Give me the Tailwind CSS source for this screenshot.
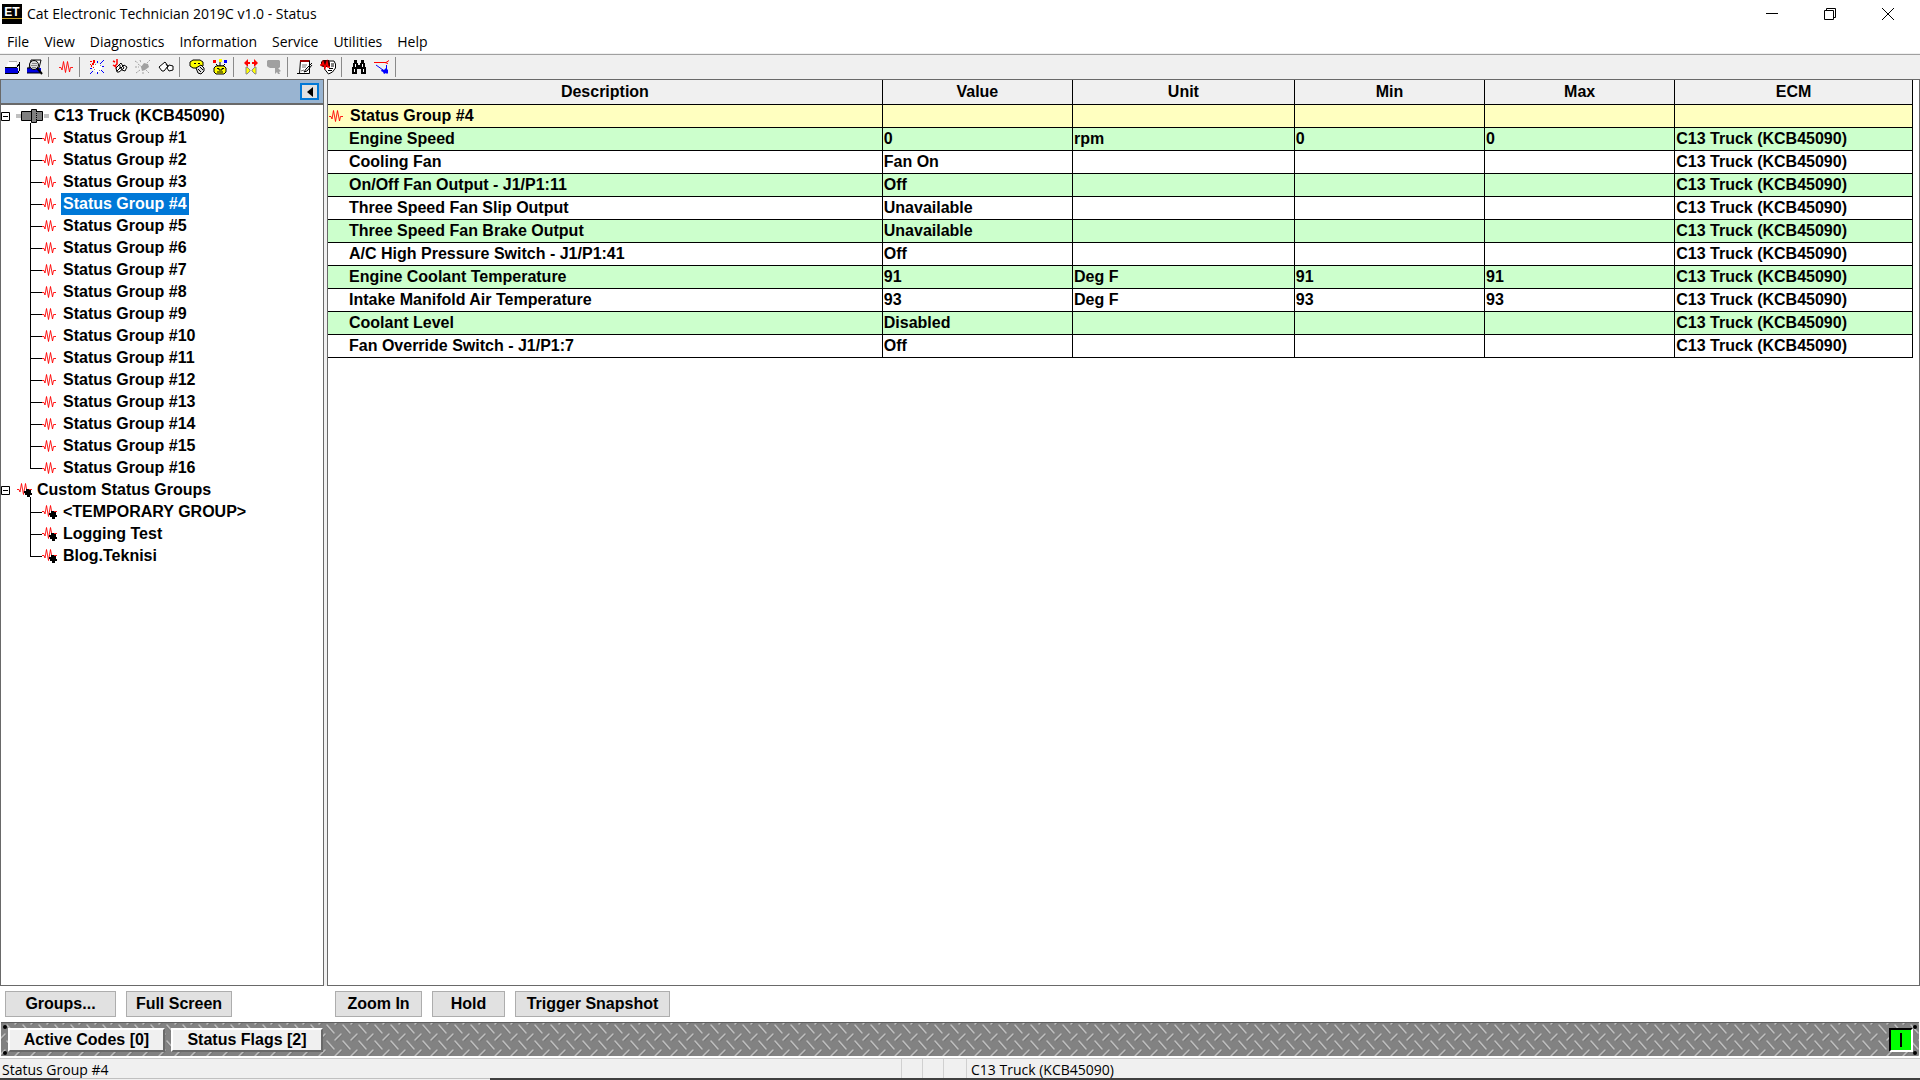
<!DOCTYPE html>
<html lang="en">
<head>
    <meta charset="UTF-8">
    <meta name="viewport" content="width=device-width, initial-scale=1.0">
    <title>Cat Electronic Technician 2019C v1.0 - Status</title>
    <script src="https://cdn.jsdelivr.net/npm/@tailwindcss/browser@4"></script>
</head>
<body class="h-screen flex flex-col overflow-hidden bg-white text-black font-['Open_Sans',sans-serif] text-sm">

    <!-- shared symbols -->
    <svg class="hidden">
        <symbol id="wave" viewBox="0 0 14 12">
            <path d="M0 6.500H2L3 9L4.500 .5L6.500 11.500L8.500 .5L10.500 11L11.500 6.500H14" fill="none" stroke="#f00" stroke-width=".9"/>
        </symbol>
        <symbol id="wave-custom" viewBox="0 0 16 15">
            <path d="M0 6.500H2L3 9L4.500 .5L6.500 11.500L8.500 .5L10.500 11L11.500 6.500H15" fill="none" stroke="#f00" stroke-width=".9"/>
            <path d="M9 6h3v1h2v3h1v2h-2v2h-3v-2H8v-2H7V8h2z" fill="#000"/>
        </symbol>
    </svg>

    <header class="flex items-start justify-between h-7 pr-[3px]">
        <div class="flex items-center h-7 pl-0.5 gap-1">
            <svg class="w-5 h-5" viewBox="0 0 20 20">
                <rect width="20" height="20" fill="#000"/>
                <rect y="14" width="20" height="1" fill="#c9a227"/>
                <text x="10" y="12" font-family="Liberation Sans" font-size="12" font-weight="bold" fill="#fff" text-anchor="middle">ET</text>
            </svg>
            <h1 class="pl-px">Cat Electronic Technician 2019C v1.0 - Status</h1>
        </div>
        <div class="flex">
            <button class="w-[58px] h-7 flex items-center justify-center" aria-label="Minimize">
                <svg class="w-3 h-3" viewBox="0 0 12 12"><path d="M0 5.5H12" stroke="#000"/></svg>
            </button>
            <button class="w-[58px] h-7 flex items-center justify-center" aria-label="Restore">
                <svg class="w-3 h-3" viewBox="0 0 12 12"><path d="M.5 2.5H9.5V11.5H.5zM2.5 2.5V.5H11.5V9.5H9.5" fill="none" stroke="#000"/></svg>
            </button>
            <button class="w-[58px] h-7 flex items-center justify-center" aria-label="Close">
                <svg class="w-3 h-3" viewBox="0 0 12 12"><path d="M0 0L12 12M12 0L0 12" stroke="#000"/></svg>
            </button>
        </div>
    </header>

    <nav class="flex gap-px h-[26px] border-b border-[#f0f0f0]">
        <a href="#" class="px-[7px] pt-1">File</a>
        <a href="#" class="px-[7px] pt-1">View</a>
        <a href="#" class="px-[7px] pt-1">Diagnostics</a>
        <a href="#" class="px-[7px] pt-1">Information</a>
        <a href="#" class="px-[7px] pt-1">Service</a>
        <a href="#" class="px-[7px] pt-1">Utilities</a>
        <a href="#" class="px-[7px] pt-1">Help</a>
    </nav>

    <div class="flex items-center h-[25px] py-0.5 bg-[#f0f0f0] border-t border-[#a0a0a0]">
        <div class="flex h-5 items-center pr-0.5 border-r border-[#8a8a8a]">
            <button class="w-[23px] flex justify-center" aria-label="Print">
                <svg class="w-4 h-4" viewBox="0 0 16 16" shape-rendering="crispEdges">
                    <path d="M5 2h8l-2 6H2z" fill="#fff"/>
                    <path d="M5 2h8" stroke="#aaa"/>
                    <path d="M1 9h13v5H1z" fill="#0000e0"/>
                    <path d="M1 8h12l2-3v7l-1 2H1" fill="none" stroke="#000"/>
                </svg>
            </button>
            <button class="w-[23px] flex justify-center" aria-label="Print preview">
                <svg class="w-4 h-4" viewBox="0 0 16 16">
                    <path d="M4 1h10l-2 8H2z" fill="#fff" stroke="#000"/>
                    <path d="M0 9h14v5H0z" fill="#0000e0"/>
                    <path d="M0 9h3M0 14h13" stroke="#000"/>
                    <circle cx="7" cy="6" r="4.500" fill="#ddd" stroke="#000"/>
                    <path d="M5 4.500h5M4 6.500h6M5 8.500h4" stroke="#888"/>
                    <path d="M10 9l5 6" stroke="#000" stroke-width="2"/>
                </svg>
            </button>
        </div>
        <div class="flex h-5 items-center pl-[5px] pr-0.5 border-r border-[#8a8a8a]">
            <button class="w-[23px] flex justify-center" aria-label="Status">
                <svg class="w-[14px] h-3"><use href="#wave"/></svg>
            </button>
        </div>
        <div class="flex h-5 items-center pl-[5px] pr-0.5 border-r border-[#8a8a8a]">
            <button class="w-[23px] flex justify-center" aria-label="Active codes">
                <svg class="w-4 h-4" viewBox="0 0 16 16" shape-rendering="crispEdges">
                    <path d="M5 5h5l3 3-1 4-4 2-4-3z" fill="#fff"/>
                    <path d="M1 2h2v1H1zM4 1h2v3H4zM3 4h2v2H3zM2 6h1v2H2zM1 5h1v1H1zM4 8h1v1H4z" fill="#f00"/>
                    <path d="M8 2h1v2H8zM14 1h1v1h-1zM13 2h1v1h-1zM12 3h1v1h-1zM11 4h1v1h-1zM13 7h2v1h-2zM12 11h1v1h-1zM13 12h1v1h-1zM14 13h1v1h-1zM8 13h1v2H8zM3 12h1v1H3zM2 13h1v1H2zM1 14h1v1H1zM1 9h2v1H1z" fill="#00f"/>
                    <path d="M6 5h1v1H6zM5 10h1v1H5zM10 11h1v1h-1zM11 6h1v1h-1z" fill="#888"/>
                </svg>
            </button>
            <button class="w-[23px] flex justify-center" aria-label="Logged codes">
                <svg class="w-4 h-4" viewBox="0 0 16 16">
                    <path d="M1 2l2 1M5 0v5l-2 2M1 6l3 2 1 3" fill="none" stroke="#f00" stroke-width="1.500"/>
                    <path d="M5 13l-1-4 5-5 3 5-5 4zM9 9l3-3 3 2-2 4-3-1z" fill="#fff" stroke="#000"/>
                    <path d="M5 12l4-4M8 6v4" stroke="#000"/>
                </svg>
            </button>
            <button class="w-[23px] flex justify-center" aria-label="Active events" disabled>
                <svg class="w-4 h-4" viewBox="0 0 16 16">
                    <path d="M6 8l3-4 4 1 1 3-4 3-3 1z" fill="#a0a0a0"/>
                    <path d="M0 2l3 2M5 1l1 3M15 1l-3 3M0 8h4M1 14l4-3M8 15v-3M14 14l-3-3M3 5l4 3" stroke="#a0a0a0" stroke-dasharray="2 1"/>
                </svg>
            </button>
            <button class="w-[23px] flex justify-center" aria-label="Logged events">
                <svg class="w-4 h-4" viewBox="0 0 16 16">
                    <path d="M4 12L1 8l6-5 3 4-4 5zM9 9l2-3 4 1v4l-4 1z" fill="#fff" stroke="#000"/>
                    <path d="M8 5l2 3" stroke="#000"/>
                </svg>
            </button>
        </div>
        <div class="flex h-5 items-center pl-[5px] pr-0.5 border-r border-[#8a8a8a]">
            <button class="w-[23px] flex justify-center" aria-label="Configuration">
                <svg class="w-4 h-4" viewBox="0 0 16 16">
                    <path d="M1 3l3-2h7l3 2v4l-4 2H4L1 7z" fill="#ff0" stroke="#000"/>
                    <path d="M5 4.500h2M9 4.500h2" stroke="#000"/>
                    <path d="M7 9l5-3 3 3v3l-3 3-3-1z" fill="#ddd" stroke="#000"/>
                    <path d="M9 10l3 3M11 8l3 3" stroke="#000"/>
                </svg>
            </button>
            <button class="w-[23px] flex justify-center" aria-label="Calibrations">
                <svg class="w-4 h-4" viewBox="0 0 16 16">
                    <path d="M1 1h3v3H1z" fill="#f00"/>
                    <path d="M7 0h3v3H7z" fill="#ff0"/>
                    <path d="M12 1h3v3h-3z" fill="#00f"/>
                    <path d="M4 5l2 2h5l2-2M8 3v4" fill="none" stroke="#000"/>
                    <path d="M4 7h8l2 2v4l-2 2H4l-2-2V9z" fill="#ff0" stroke="#000"/>
                    <path d="M5 9.500h2v1.500h3v-1.500h2M5 13h6" fill="none" stroke="#000"/>
                </svg>
            </button>
        </div>
        <div class="flex h-5 items-center pl-[5px] pr-0.5 border-r border-[#8a8a8a]">
            <button class="w-[23px] flex justify-center" aria-label="Connect">
                <svg class="w-4 h-4" viewBox="0 0 16 16">
                    <path d="M1 4l4-4v3h2v2H5v3zM15 4l-4-4v3H9v2h2v3z" fill="#f00"/>
                    <path d="M3 8h1l3 3v1l-3 3H3zM13 8h-1l-3 3v1l3 3h1z" fill="#ff0" stroke="#888"/>
                </svg>
            </button>
            <button class="w-[23px] flex justify-center" aria-label="Context help" disabled>
                <svg class="w-4 h-4" viewBox="0 0 16 16">
                    <path d="M2 1h11l1 1v6l-1 1h-1l3 3-2 1 1 2h-2l-1-2-2 2V9H4L2 8 1 7V2z" fill="#a0a0a0"/>
                </svg>
            </button>
        </div>
        <div class="flex h-5 items-center pl-[5px] pr-0.5 border-r border-[#8a8a8a]">
            <button class="w-[23px] flex justify-center" aria-label="Report">
                <svg class="w-4 h-4" viewBox="0 0 16 16">
                    <path d="M3.500 1.500h9v13h-10z" fill="#fff" stroke="#000"/>
                    <path d="M3 1h9v2H3z" fill="#a00000"/>
                    <path d="M5 6h5M5 8h4M4 12l3-1" stroke="#777"/>
                    <path d="M15 4l-6 6-2 3 3-1 5-6M0 14.500h6" fill="none" stroke="#000"/>
                </svg>
            </button>
            <button class="w-[23px] flex justify-center" aria-label="Snapshot">
                <svg class="w-4 h-4" viewBox="0 0 16 16">
                    <path d="M5 2h9l1.500 3v4l-3 4-4 2-4-5z" fill="#fff" stroke="#000"/>
                    <path d="M11 5h3M11 7h3M9 9.500h4M8 11.500h4" stroke="#000"/>
                    <path d="M1 3l2-2h6l1 3v4H3L1 7z" fill="#300"/>
                    <path d="M0 6h2l1-3 2 6 2-6 1 5h2" fill="none" stroke="#f00" stroke-width="1.500"/>
                </svg>
            </button>
        </div>
        <div class="flex h-5 items-center pl-[5px] pr-0.5 border-r border-[#8a8a8a]">
            <button class="w-[23px] flex justify-center" aria-label="Find">
                <svg class="w-4 h-4" viewBox="0 0 16 16" shape-rendering="crispEdges">
                    <path d="M3 1h3v3h1v2h2V4h1V1h3v3h1v4h1v7h-5v-5H6v5H1V8h1V4h1z" fill="#000"/>
                    <path d="M4 5h1v3H4zM3 10h1v3H3zM11 5h1v3h-1zM12 10h1v3h-1z" fill="#fff"/>
                </svg>
            </button>
            <button class="w-[23px] flex justify-center" aria-label="Filter">
                <svg class="w-4 h-4" viewBox="0 0 16 16">
                    <path d="M0 3.500h12l3-2M11 3.500l3 1" fill="none" stroke="#f00"/>
                    <path d="M2 6l7 5M12.500 6v4" stroke="#00f"/>
                    <path d="M8 10l2 1 2-2 2 2v3l-1 1-1-1-2 1-1-2-2-1z" fill="#00f"/>
                </svg>
            </button>
        </div>
    </div>

    <main class="flex flex-1 min-h-0 gap-[3px] bg-[#f0f0f0]">
        <aside class="w-[324px] shrink-0 bg-white border border-[#696969]">
            <div class="flex items-center justify-end h-[25px] pr-1 bg-[#99b4d1] border-b-2 border-[#696969]">
                <button class="w-[19px] h-[17px] flex items-center justify-center bg-[#e1e1e1] border-2 border-[#0078d7]" aria-label="Hide tree">
                    <svg class="w-[6px] h-[10px]" viewBox="0 0 6 10"><path d="M6 0V10L0 5z" fill="#000"/></svg>
                </button>
            </div>
            <ul id="tree" class="font-['Liberation_Sans',sans-serif] text-base font-bold"></ul>
        </aside>

        <section class="flex-1 min-w-0 pr-[6px] bg-white border border-[#696969] font-['Liberation_Sans',sans-serif] text-base font-bold">
            <table class="w-full table-fixed border-separate border-spacing-0 leading-[22px]">
                <colgroup>
                    <col class="w-[35%]">
                    <col class="w-[12%]">
                    <col class="w-[14%]">
                    <col class="w-[12%]">
                    <col class="w-[12%]">
                    <col class="w-[15%]">
                </colgroup>
                <thead>
                    <tr class="h-[25px] bg-[#f0f0f0]">
                        <th class="p-0 border-r border-b border-black">Description</th>
                        <th class="p-0 border-r border-b border-black">Value</th>
                        <th class="p-0 border-r border-b border-black">Unit</th>
                        <th class="p-0 border-r border-b border-black">Min</th>
                        <th class="p-0 border-r border-b border-black">Max</th>
                        <th class="p-0 border-r border-b border-black">ECM</th>
                    </tr>
                </thead>
                <tbody id="rows"></tbody>
            </table>
        </section>
    </main>

    <div class="flex items-center h-9 pl-[5px] font-['Liberation_Sans',sans-serif] text-base font-bold">
        <div class="flex gap-[10px] w-[330px]">
            <button class="w-[111px] h-[26px] bg-[#e1e1e1] border border-[#adadad] leading-6">Groups...</button>
            <button class="w-[106px] h-[26px] bg-[#e1e1e1] border border-[#adadad] leading-6">Full Screen</button>
        </div>
        <div class="flex gap-[10px]">
            <button class="w-[87px] h-[26px] bg-[#e1e1e1] border border-[#adadad] leading-6">Zoom In</button>
            <button class="w-[73px] h-[26px] bg-[#e1e1e1] border border-[#adadad] leading-6">Hold</button>
            <button class="w-[155px] h-[26px] bg-[#e1e1e1] border border-[#adadad] leading-6">Trigger Snapshot</button>
        </div>
    </div>

    <!-- tread plate -->
    <div class="relative flex items-center justify-between h-[34px] mx-px pl-[7px] pr-[6px] border-t border-[#606060] bg-[#828282] font-['Liberation_Sans',sans-serif] text-base font-bold">
        <svg class="absolute inset-0 w-full h-full">
            <defs>
                <pattern id="plate" x="1" y="-2" width="16" height="16" patternUnits="userSpaceOnUse">
                    <path d="M5 5l7 8M-2 4l6-7M14 4l6-7M-2 20l6-7M14 20l6-7" stroke="#787878" stroke-width="2"/>
                    <path d="M5 4l7 8M-3 3l6-6M13 3l6-6M-3 19l6-6M13 19l6-6" stroke="#bebebe" stroke-width="1.500" stroke-linecap="round"/>
                </pattern>
            </defs>
            <rect width="100%" height="100%" fill="url(#plate)"/>
        </svg>
        <div class="absolute left-[2px] top-[2px] w-1 h-1 rounded-full bg-black"></div>
        <div class="absolute left-[2px] bottom-[1px] w-1 h-1 rounded-full bg-black"></div>
        <div class="absolute right-[2px] top-[2px] w-1 h-1 rounded-full bg-black"></div>
        <div class="absolute right-[2px] bottom-[1px] w-1 h-1 rounded-full bg-black"></div>
        <div class="relative flex gap-[6px]">
            <button class="w-[157px] h-6 bg-[#f0f0f0] border-2 border-t-white border-l-white border-r-[#696969] border-b-[#696969] leading-5">Active Codes [0]</button>
            <button class="w-[152px] h-6 bg-[#f0f0f0] border-2 border-t-white border-l-white border-r-[#696969] border-b-[#696969] leading-5">Status Flags [2]</button>
        </div>
        <div class="relative w-6 h-6 flex items-center justify-center bg-[#00ff00] border-2 border-t-black border-l-black border-r-white border-b-white">
            <div class="w-0.5 h-[14px] bg-black"></div>
        </div>
    </div>

    <footer class="pt-0.5">
        <div class="flex h-5 bg-[#f0f0f0] border-t border-[#c8c8c8] leading-[22px]">
            <div class="w-[902px] pl-0.5 border-r border-[#d0d0d0]">Status Group #4</div>
            <div class="w-[21px] border-r border-[#d0d0d0]"></div>
            <div class="w-[21px] border-r border-[#d0d0d0]"></div>
            <div class="w-[23px] border-r border-[#d0d0d0]"></div>
            <div class="flex-1 pl-1">C13 Truck (KCB45090)</div>
        </div>
        <div class="flex h-0.5">
            <div class="w-[60px] bg-[#404040]"></div>
            <div class="w-[430px] bg-[#f0f0f0] border-t border-[#c0c0c0]"></div>
            <div class="flex-1 bg-[#404040]"></div>
        </div>
    </footer>

    <script>
        const ecm = 'C13 Truck (KCB45090)';
        const data = [
            ['Engine Speed', '0', 'rpm', '0', '0'],
            ['Cooling Fan', 'Fan On', '', '', ''],
            ['On/Off Fan Output - J1/P1:11', 'Off', '', '', ''],
            ['Three Speed Fan Slip Output', 'Unavailable', '', '', ''],
            ['Three Speed Fan Brake Output', 'Unavailable', '', '', ''],
            ['A/C High Pressure Switch - J1/P1:41', 'Off', '', '', ''],
            ['Engine Coolant Temperature', '91', 'Deg F', '91', '91'],
            ['Intake Manifold Air Temperature', '93', 'Deg F', '93', '93'],
            ['Coolant Level', 'Disabled', '', '', ''],
            ['Fan Override Switch - J1/P1:7', 'Off', '', '', '']
        ];

        const cell = text => `<td class="h-[23px] p-0 pl-px border-r border-b border-black">${text}</td>`;

        document.getElementById('rows').innerHTML = `
            <tr class="bg-[#ffffc0]">
                <td class="h-[23px] p-0 border-r border-b border-black">
                    <div class="flex items-center gap-[7px] pl-px"><svg class="w-[14px] h-3"><use href="#wave"/></svg>Status Group #4</div>
                </td>
                ${cell('').repeat(5)}
            </tr>` + data.map((row, i) => `
            <tr class="${i % 2 ? 'bg-white' : 'bg-[#ccffcc]'}">
                <td class="h-[23px] p-0 pl-[21px] border-r border-b border-black">${row[0]}</td>
                ${row.slice(1).map(cell).join('')}
                ${cell(ecm)}
            </tr>`).join('');

        // child row: connector, icon, label
        function child(name, icon, last, selected) {
            return `
            <li class="flex items-center h-[22px] pl-[29px]">
                <svg class="w-3 h-[22px]" viewBox="0 0 12 22"><path d="M.5 0V${last ? 12 : 22}M0 11.5H12" fill="none" stroke="#000"/></svg>
                ${icon}
                <a href="#" class="h-[22px] px-0.5 leading-[22px] ${selected ? 'bg-[#0078d7] text-white' : ''}">${name}</a>
            </li>`;
        }

        const box = '<svg class="w-[9px] h-[9px]" viewBox="0 0 9 9"><path d="M.5 .5H8.5V8.5H.5zM2 4.500H7" fill="none" stroke="#000"/></svg>';
        const wave = '<svg class="w-[14px] h-3 mr-[5px]"><use href="#wave"/></svg>';
        const custom = '<svg class="w-4 h-[15px] mr-[3px]"><use href="#wave-custom"/></svg>';
        let html = `
            <li class="flex items-center h-[22px]">${box}
                <svg class="w-[33px] h-[22px] ml-1.5 mr-[3px]" viewBox="0 0 33 22">
                    <path d="M0 9h5v4H0zM28 9h5v4h-5z" fill="#c0c0c0"/>
                    <path d="M5.500 6.500H15.500V4.500H20.500V6.500H26.500V15.500H20.500V17.500H15.500V15.500H5.500z" fill="#808080" stroke="#000"/>
                    <path d="M15.500 6V16M14.500 18V22" stroke="#000"/>
                    <path d="M20.500 6V16" stroke="#000" stroke-dasharray="1 1"/>
                </svg>
                <a href="#" class="pl-0.5 leading-[22px]">${ecm}</a>
            </li>`;
        for (let n = 1; n <= 16; n++) {
            html += child(`Status Group #${n}`, wave, n === 16, n === 4);
        }
        html += `
            <li class="flex items-center h-[22px]">${box}
                <svg class="w-4 h-[22px] ml-[7px] mr-1" viewBox="0 -4 16 22"><use href="#wave-custom" width="16" height="15"/><path d="M13.500 14V18" stroke="#000"/></svg>
                <a href="#" class="leading-[22px]">Custom Status Groups</a>
            </li>`;
        html += child('&lt;TEMPORARY GROUP&gt;', custom, false, false);
        html += child('Logging Test', custom, false, false);
        html += child('Blog.Teknisi', custom, true, false);
        document.getElementById('tree').innerHTML = html;
    </script>

</body>
</html>
